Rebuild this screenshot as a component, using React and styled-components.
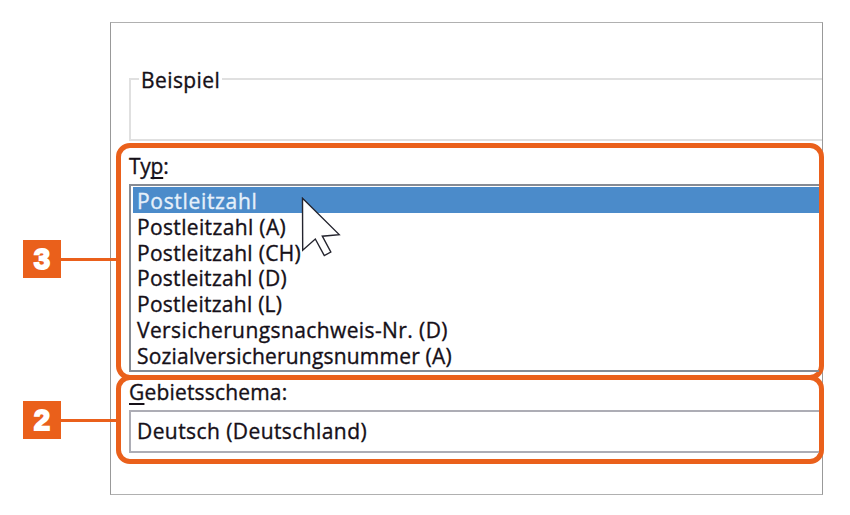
import styled, { createGlobalStyle } from "styled-components";

const GlobalStyle = createGlobalStyle`
  * {
    box-sizing: border-box;
  }

  body {
    margin: 0;
    background: #fff;
    color: #161018;
    font-family: "Open Sans", "Noto Sans", sans-serif;
    font-size: 21px;
  }
`;

const Page = styled.main`
  width: 850px;
  height: 515px;
  padding: 22px 0 0 110px;
  overflow: hidden;
`;

const Dialog = styled.section`
  width: 713px;
  height: 473px;
  padding: 55px 0 0 5px;
  border: 1px solid #999;
  border-top-color: #b0b0b0;
  border-bottom-color: #b0b0b0;
`;

const Sample = styled.fieldset`
  height: 72px;
  margin: -9px 0 2px 13px;
  padding: 0;
  border: 2px solid #e0e0e0;
  border-right: none;
`;

const Legend = styled.legend`
  height: 20px;
  margin-left: 8px;
  padding: 0 2px;
  line-height: 22px;
`;

const Text = styled.span`
  display: inline-block;
  white-space: nowrap;
  letter-spacing: ${(props) => props.$spacing || 0}px;
  -webkit-text-stroke: 0.35px currentColor;
`;

const Marked = styled.div`
  position: relative;
  width: 708px;
  height: ${(props) => props.$height}px;
  margin-top: ${(props) => props.$overlap || 0}px;
  padding-left: 8px;
  border: 5px solid #ea601b;
  border-radius: 14px;
`;

const Callout = styled.div`
  position: absolute;
  top: ${(props) => props.$top}px;
  left: -98px;
  display: flex;
  align-items: center;
  width: 94px;
`;

const Badge = styled.span`
  width: 38px;
  height: 38px;
  background: #ea601b;
  color: #fff;
  font: bold 29.5px/38px "Liberation Sans", Arial, sans-serif;
  text-align: center;
  -webkit-text-stroke: 1.8px #fff;
`;

const Connector = styled.span`
  flex: 1;
  height: 3px;
  background: #ea601b;
`;

const Label = styled.div`
  height: ${(props) => props.$height}px;
  padding-top: ${(props) => props.$offset || 0}px;
  line-height: 22px;

  & u {
    text-decoration-thickness: 1.5px;
    text-underline-offset: 2.5px;
    text-decoration-skip-ink: none;
  }
`;

const List = styled.ul`
  height: 188px;
  margin: 0;
  padding: 1px 0 0 2px;
  border: 2px solid #868b94;
  border-right: none;
  list-style: none;
`;

const Option = styled.li`
  height: 25.8px;
  padding: 0 0 0 4px;
  background: ${(props) => (props.$selected ? "#4b8bca" : "transparent")};
  color: ${(props) => (props.$selected ? "#e6f0fa" : "inherit")};
  line-height: 28px;
`;

const Combo = styled.div`
  height: 43px;
  padding-left: 6px;
  border: 2px solid #adadb5;
  border-right: none;
  line-height: 38px;
`;

const Cursor = styled.svg`
  position: absolute;
  top: 49px;
  left: 180px;
  width: 42px;
  height: 62px;
`;

const types = [
  { name: "Postleitzahl", spacing: 0.68 },
  { name: "Postleitzahl (A)", spacing: 0.35 },
  { name: "Postleitzahl (CH)", spacing: 0.3 },
  { name: "Postleitzahl (D)", spacing: 0.28 },
  { name: "Postleitzahl (L)", spacing: 0.26 },
  { name: "Versicherungsnachweis-Nr. (D)", spacing: 0.4 },
  { name: "Sozialversicherungsnummer (A)", spacing: 0.2 },
];

function NumberCallout({ number, top }) {
  return (
    <Callout $top={top}>
      <Badge>{number}</Badge>
      <Connector />
    </Callout>
  );
}

function App() {
  return (
    <>
      <GlobalStyle />
      <Page>
        <Dialog>
          <Sample>
            <Legend>
              <Text $spacing={0.42}>Beispiel</Text>
            </Legend>
          </Sample>

          <Marked $height={237}>
            <Label $height={36} $offset={7}>
              <Text $spacing={-0.25}>
                Ty<u>p</u>:
              </Text>
            </Label>
            <List>
              {types.map((type, index) => (
                <Option key={type.name} $selected={index === 0}>
                  <Text $spacing={type.spacing}>{type.name}</Text>
                </Option>
              ))}
            </List>
            <Cursor viewBox="0 0 42 62">
              <path
                d="M1.5 1.2 L38.2 37.6 L21.3 39.2 L29.8 55 L23.3 58.6 L14.3 42 L1.7 53.2 Z"
                fill="#fff"
                stroke="#24242e"
                strokeWidth="1.4"
              />
            </Cursor>
            <NumberCallout number={3} top={92} />
          </Marked>

          <Marked $height={89} $overlap={-5}>
            <Label $height={30} $offset={1}>
              <Text $spacing={0.18}>
                <u>G</u>ebietsschema:
              </Text>
            </Label>
            <Combo>
              <Text $spacing={0.42}>Deutsch (Deutschland)</Text>
            </Combo>
            <NumberCallout number={2} top={21} />
          </Marked>
        </Dialog>
      </Page>
    </>
  );
}

export default App;
